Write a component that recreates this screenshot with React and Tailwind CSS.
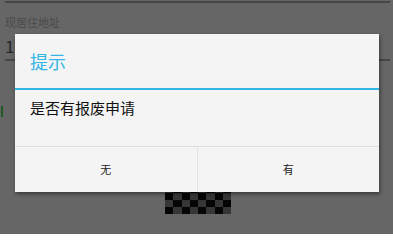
import React from "react";

const font = { fontFamily: '"Noto Sans CJK SC", "Noto Sans", sans-serif' };

function Checker() {
  const cells = [];
  for (let r = 0; r < 4; r++) {
    for (let c = 0; c < 8; c++) {
      cells.push(
        <div
          key={`${r}-${c}`}
          className={(r + c) % 2 === 0 ? "bg-[#363636]" : "bg-[#050505]"}
        />
      );
    }
  }
  return (
    <div className="ml-[165px] grid h-[28px] w-[66px] grid-cols-8 grid-rows-4">
      {cells}
    </div>
  );
}

export default function App() {
  return (
    <div
      className="relative h-[234px] w-[393px] overflow-hidden bg-[#666666]"
      style={font}
    >
      {/* background page (dimmed) */}
      <div className="flex flex-col">
        <div className="ml-[5px] mr-[3px] mt-[1px] h-[2px] bg-[#474747]" />
        <div className="ml-[5px] mt-[12px] text-[11px] leading-[14px] text-[#4a4a4a]">
          现居住地址
        </div>
        <div className="ml-[5px] mt-[7px] text-[17px] leading-[20px] text-[#262626]">
          1
        </div>
        <div className="ml-[5px] mr-[3px] mt-[3px] h-[2px] bg-[#474747]" />
        <div className="ml-[1px] mt-[45px] h-[11px] w-[2px] bg-[#1f5a22]" />
        <div className="mt-[69px]">
          <Checker />
        </div>
      </div>

      {/* dialog */}
      <div className="absolute left-[15px] top-[34px] flex h-[158px] w-[364px] flex-col bg-[#f4f4f4] shadow-[1px_2px_4px_rgba(0,0,0,0.45)]">
        <div className="flex h-[54px] items-center pl-[15px] text-[18px] leading-[20px] text-[#33b5e5]">
          提示
        </div>
        <div className="h-[2px] bg-[#33b5e5]" />
        <div className="h-[56px] pl-[15px] pt-[9px] text-[15px] leading-[18px] text-[#111111]">
          是否有报废申请
        </div>
        <div className="h-[1px] bg-[#dedede]" />
        <div className="flex flex-1">
          <div className="flex flex-1 items-center justify-center border-r border-[#e2e2e2] text-[11px] text-[#222222]">
            无
          </div>
          <div className="flex flex-1 items-center justify-center text-[11px] text-[#222222]">
            有
          </div>
        </div>
      </div>
    </div>
  );
}
